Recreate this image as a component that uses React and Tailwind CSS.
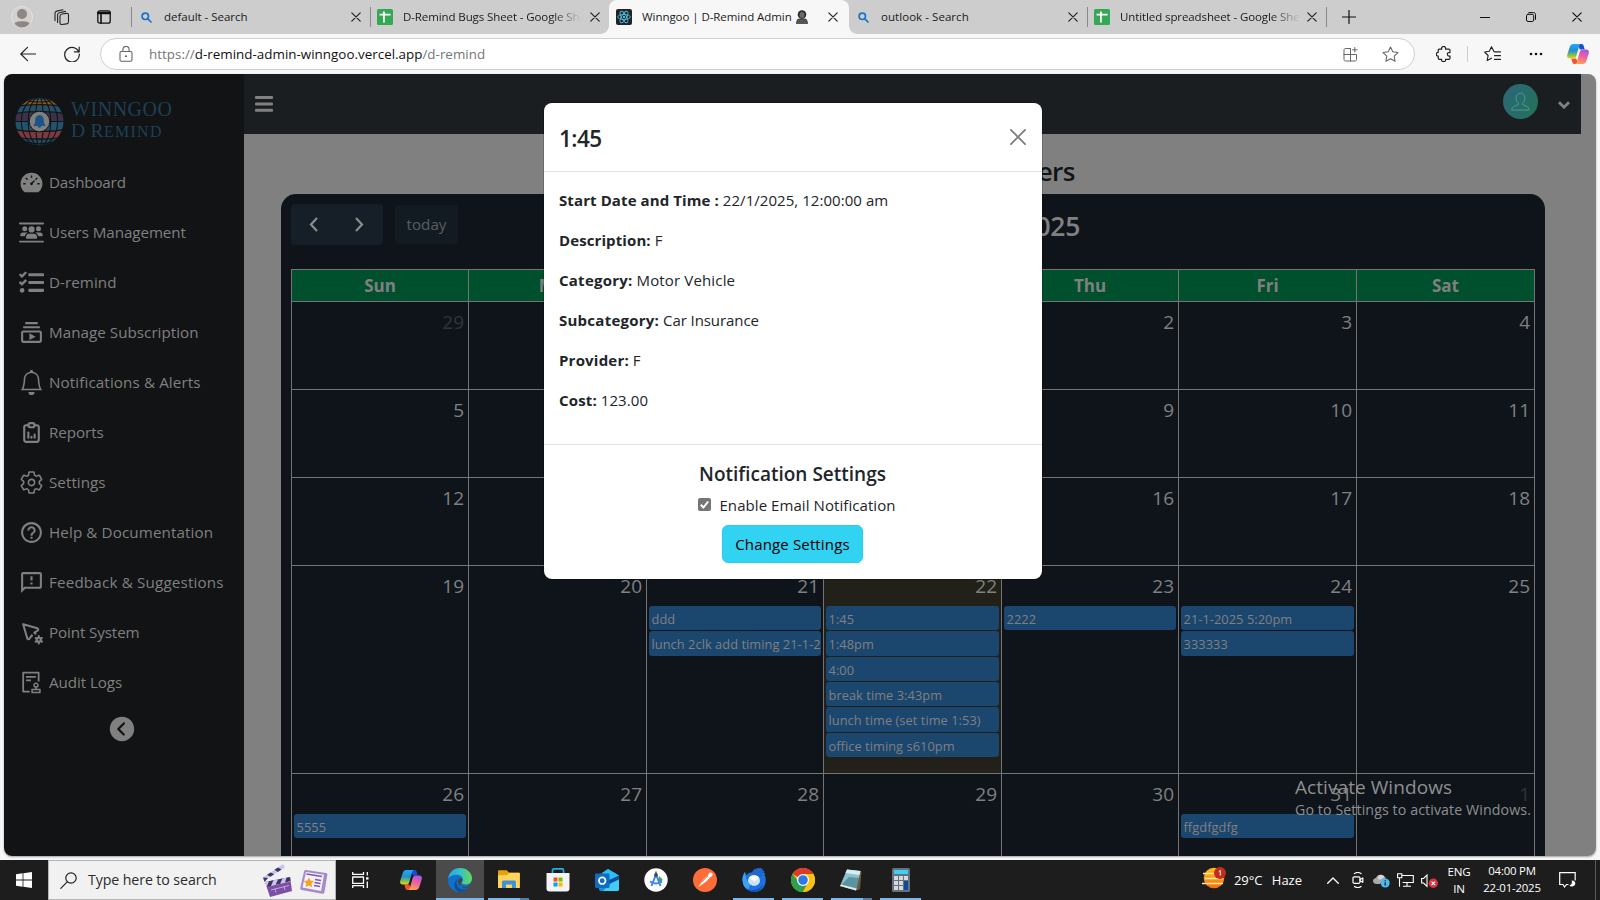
import React from "react";
import { AiFillDashboard, AiOutlineAudit } from "react-icons/ai";
import { FaUsersBetweenLines } from "react-icons/fa6";
import { FaTasks } from "react-icons/fa";
import { MdOutlineSubscriptions, MdHelpOutline, MdOutlineFeedback } from "react-icons/md";
import { BsBell } from "react-icons/bs";
import { TbReportAnalytics, TbPointerCog } from "react-icons/tb";
import { IoSettingsOutline } from "react-icons/io5";
import { IoIosArrowDropleftCircle } from "react-icons/io";

const Svg = ({ children, className = "", vb = "0 0 24 24", ...rest }) => (
  <svg viewBox={vb} fill="none" stroke="currentColor" strokeLinecap="round" strokeLinejoin="round" className={"shrink-0 block " + className} {...rest}>
    {children}
  </svg>
);

/* ---------- browser chrome ---------- */

const CloseX = ({ className = "" }) => (
  <Svg vb="0 0 10 10" className={"w-[10px] h-[10px] text-[#222] " + className} strokeWidth="1.2">
    <path d="M.8.8l8.4 8.4M9.2.8L.8 9.2" />
  </Svg>
);

const SearchFav = () => (
  <Svg vb="0 0 11 11" className="w-[11px] h-[11px] text-[#1a73c8]" strokeWidth="1.7">
    <circle cx="4.3" cy="4.3" r="3.2" />
    <path d="M6.8 6.8l3.2 3.2" />
  </Svg>
);

const SheetFav = () => (
  <svg viewBox="0 0 16 16" className="w-4 h-4 shrink-0 block">
    <rect width="16" height="16" rx="1.5" fill="#34a853" />
    <path d="M2.6 5.6h11M6.9 2.6v11" stroke="#fff" strokeWidth="1.8" />
  </svg>
);

const ReactFav = () => (
  <svg viewBox="0 0 16 16" className="w-4 h-4 shrink-0 block">
    <rect width="16" height="16" rx="2" fill="#20232a" />
    <g fill="none" stroke="#53b9d4" strokeWidth=".9">
      <ellipse cx="8" cy="8" rx="6.4" ry="2.5" />
      <ellipse cx="8" cy="8" rx="6.4" ry="2.5" transform="rotate(60 8 8)" />
      <ellipse cx="8" cy="8" rx="6.4" ry="2.5" transform="rotate(120 8 8)" />
    </g>
    <circle cx="8" cy="8" r="1.2" fill="#53b9d4" />
  </svg>
);

const Divider = () => <div className="w-px h-5 bg-[#8a8a8a] shrink-0" />;

const TabTitle = ({ children, fade, className = "" }) => (
  <span
    className={
      "block overflow-hidden whitespace-nowrap text-[11.5px] leading-[18px] text-[#1b1b1b] " +
      (fade ? "[mask-image:linear-gradient(to_right,#000_calc(100%-28px),transparent)] " : "") +
      className
    }
  >
    {children}
  </span>
);

function TabBar() {
  return (
    <div className="h-[34px] bg-[#cdcdcd] flex items-center shrink-0">
      <svg viewBox="0 0 22 22" className="ml-[11px] w-[22px] h-[22px] shrink-0">
        <circle cx="11" cy="11" r="10.5" fill="#d3d0cd" stroke="#e4e1de" />
        <circle cx="11" cy="8" r="5" fill="#8d8783" />
        <path d="M3.5 17.5c1-3 14-3 15 0-2 2.800-4.500 4-7.500 4s-5.500-1.200-7.500-4z" fill="#8d8783" />
      </svg>
      <Svg vb="0 0 16 16" className="ml-[21px] w-4 h-4 text-[#222]" strokeWidth="1.1">
        <rect x="6" y="4.600" width="8.500" height="10.500" rx="2" transform="skewY(-8) translate(0 1.500)" />
        <path d="M3.600 13.400V6c0-1.200.6-2 1.800-2.300l6-1.300M1 11.600V4.400C1 3.200 1.600 2.400 2.800 2.100L9 .8" />
      </Svg>
      <Svg vb="0 0 14 14" className="ml-[27px] w-[14px] h-[14px] text-[#111]" strokeWidth="1.3">
        <rect x=".8" y=".8" width="12.400" height="12.400" rx="2" />
        <path d="M1 2.500h12M1 3.400h12M4 3.500v9.500" strokeWidth="1.600" />
      </Svg>
      <div className="ml-5 flex items-center">
        <Divider />
        <div className="w-[238px] pl-[9px] flex items-center">
          <SearchFav />
          <TabTitle className="ml-3 w-[176px] tracking-[-0.030px]">default - Search</TabTitle>
          <CloseX className="ml-[11px]" />
        </div>
        <Divider />
        <div className="w-[238px] pl-[6px] flex items-center">
          <SheetFav />
          <TabTitle fade className="ml-[10px] w-[178px] tracking-[-0.1px]">D-Remind Bugs Sheet - Google Sheets</TabTitle>
          <CloseX className="ml-[9px]" />
        </div>
      </div>
      <div className="relative w-[240px] h-[34px] bg-[#f7f7f7] rounded-t-[8px] flex items-center pl-[7px]">
        <div className="absolute -left-2 bottom-0 w-2 h-2 bg-[radial-gradient(circle_at_0_0,transparent_7.500px,#f7f7f7_8px)]" />
        <div className="absolute -right-2 bottom-0 w-2 h-2 bg-[radial-gradient(circle_at_100%_0,transparent_7.500px,#f7f7f7_8px)]" />
        <ReactFav />
        <TabTitle className="ml-[10px] w-[152px] tracking-[-0.060px]">Winngoo | D-Remind Admin</TabTitle>
        <svg viewBox="0 0 12 14" className="ml-[2px] w-3 h-[14px] shrink-0">
          <circle cx="6" cy="4.500" r="4.300" fill="#2b2b2b" />
          <ellipse cx="6" cy="5" rx="2.500" ry="2.900" fill="#6a6a6a" />
          <path d="M1 11c0-1.600 1-2.300 5-2.300s5 .7 5 2.300l.8 2.500H.2z" fill="#555" stroke="#222" strokeWidth=".6" />
        </svg>
        <CloseX className="ml-[20px]" />
      </div>
      <div className="w-[238px] pl-[9px] flex items-center">
        <SearchFav />
        <TabTitle className="ml-3 w-[176px] tracking-[0.050px]">outlook - Search</TabTitle>
        <CloseX className="ml-[11px]" />
      </div>
      <Divider />
      <div className="w-[238px] pl-[6px] flex items-center">
        <SheetFav />
        <TabTitle fade className="ml-[10px] w-[180px] tracking-[-0.1px]">Untitled spreadsheet - Google Sheets</TabTitle>
        <CloseX className="ml-[7px]" />
      </div>
      <Divider />
      <Svg vb="0 0 14 14" className="ml-[15px] w-[14px] h-[14px] text-[#111]" strokeWidth="1.200">
        <path d="M7 .5v13M.5 7h13" />
      </Svg>
      <Svg vb="0 0 10 10" className="ml-auto w-[10px] h-[10px] text-[#111]" strokeWidth="1.100">
        <path d="M.3 5.500h9.400" />
      </Svg>
      <Svg vb="0 0 10 10" className="ml-[36px] w-[10px] h-[10px] text-[#111]" strokeWidth="1">
        <rect x=".5" y="2.300" width="7.200" height="7.200" rx="1.500" />
        <path d="M2.800.6H7.500c1.200 0 2 .8 2 2v4.800" />
      </Svg>
      <CloseX className="ml-[36px] mr-[18px] !text-[#111]" />
    </div>
  );
}

const Copilot = ({ className, id }) => (
  <svg viewBox="0 0 22 20" className={"shrink-0 block " + className}>
    <defs>
      <linearGradient id={id + "a"} x1="0" y1="0" x2="0" y2="1">
        <stop offset="0" stopColor="#23a8f5" />
        <stop offset=".45" stopColor="#1f8fd6" />
        <stop offset=".75" stopColor="#7cc04a" />
        <stop offset="1" stopColor="#f5cf1f" />
      </linearGradient>
      <linearGradient id={id + "b"} x1="0.600" y1="0" x2=".3" y2="1">
        <stop offset="0" stopColor="#a855e8" />
        <stop offset=".45" stopColor="#ee5fa0" />
        <stop offset="1" stopColor="#ffa24d" />
      </linearGradient>
    </defs>
    <path d="M11 0h3.500c1.400 0 1.900.8 2.300 2.200l.9 3.300h-5z" fill="#1a4fd0" />
    <path d="M11 20H7.500c-1.400 0-1.900-.8-2.300-2.200l-.9-3.300h5z" fill="#f0562e" />
    <path d="M6.500 0h7.300c-1 .4-1.400 1.200-1.800 2.500L9.300 12c-.5 1.800-1.400 2.600-3.200 2.600H2.600C.5 14.600-.3 13 .2 11L2.700 3C3.300 1 4.500 0 6.500 0z" fill={"url(#" + id + "a)"} />
    <path d="M15.500 20H8.200c1-.4 1.400-1.200 1.800-2.500L12.700 8c.5-1.800 1.400-2.600 3.200-2.600h3.500c2.100 0 2.900 1.600 2.400 3.600L19.300 17c-.6 2-1.800 3-3.800 3z" fill={"url(#" + id + "b)"} />
  </svg>
);

function AddressBar() {
  return (
    <div className="h-[40px] bg-[#f7f7f7] flex items-center shrink-0 text-[#222]">
      <Svg vb="0 0 16 16" className="ml-[20px] w-4 h-4" strokeWidth="1.200">
        <path d="M15.500 8H.8M7.500 1.300L.8 8l6.700 6.700" />
      </Svg>
      <Svg vb="0 0 16 16" className="ml-[28px] w-4 h-4" strokeWidth="1.200">
        <path d="M14.900 6.200A7.300 7.300 0 1 0 15.300 8M15.200 1v4.800h-4.800" />
      </Svg>
      <div className="ml-[20px] w-[1315px] h-8 rounded-full bg-white border border-[#d0d0d0] flex items-center pl-[18px]">
        <Svg vb="0 0 14 16" className="w-[14px] h-4 text-[#666]" strokeWidth="1.100">
          <rect x="1" y="5.500" width="12" height="9.800" rx="1.500" />
          <path d="M3.900 5.500V3.600a3.100 3.100 0 0 1 6.200 0v1.900" />
          <circle cx="7" cy="10.300" r=".5" fill="currentColor" />
        </Svg>
        <span className="ml-4 text-[13.400px] tracking-[0.010px] leading-5 whitespace-nowrap text-[#767676]">
          https://<span className="text-[#111]">d-remind-admin-winngoo.vercel.app</span>/d-remind
        </span>
        <Svg vb="0 0 15 15" className="ml-auto w-[15px] h-[15px] text-[#666]" strokeWidth="1">
          <path d="M7.500 1.500h-5c-1 0-1.500.5-1.500 1.500v9.500c0 1 .5 1.500 1.500 1.500h9.500c1 0 1.500-.5 1.500-1.500V7.500H1M7.500 1.500V14M11.800 0.500v4.600M9.500 2.800h4.600" />
        </Svg>
        <Svg className="ml-[24px] mr-[15px] w-[17px] h-[17px] text-[#666]" strokeWidth="1.500">
          <path d="M12 1.500l3.200 6.700 7.300 1-5.300 5.100 1.300 7.300L12 18.100l-6.500 3.500 1.300-7.300L1.500 9.200l7.300-1z" />
        </Svg>
      </div>
      <Svg vb="0 0 16 16" className="ml-[21px] w-4 h-4" strokeWidth="1.200">
        <path d="M3 3.200h2.700c-.4-1.700.6-2.700 1.900-2.700s2.300 1 1.900 2.700h3.300c.7 0 1.200.5 1.200 1.200v2.200c-1.700-.4-2.600.500-2.600 1.700s.9 2.100 2.600 1.700v2c0 .8-.5 1.300-1.200 1.300H9.500c.4 1.700-.6 2.400-1.900 2.400s-2.300-.7-1.900-2.400H3.400c-.8 0-1.200-.5-1.200-1.300v-2C.9 10 .4 9.300.4 8.200s.6-1.900 1.800-1.700V4.400c0-.700.3-1.200.8-1.200z" />
      </Svg>
      <div className="ml-[15px] w-px h-4 bg-[#cfcfcf]" />
      <Svg vb="0 0 17 16" className="ml-[16px] w-[17px] h-4" strokeWidth="1.150">
        <path d="M9.800 5.300L7.500.8 5.300 5.300.6 6l3.500 3.500-.9 5 4.300-2.300M10.500 5.800h6M10.500 9.600h6M10.500 13.400h6" />
      </Svg>
      <svg viewBox="0 0 14 4" className="ml-[28px] w-[14px] h-1">
        <circle cx="2" cy="2" r="1.300" fill="#111" />
        <circle cx="7" cy="2" r="1.300" fill="#111" />
        <circle cx="12" cy="2" r="1.300" fill="#111" />
      </svg>
      <Copilot id="tc" className="ml-[24px] w-[22px] h-5" />
    </div>
  );
}

/* ---------- app sidebar ---------- */

const Globe = () => (
  <svg viewBox="0 0 50 50" className="w-[49px] h-[49px] shrink-0">
    <defs>
      <clipPath id="gl">
        <circle cx="25" cy="25" r="24.500" />
      </clipPath>
    </defs>
    <g clipPath="url(#gl)">
      <rect width="50" height="4" fill="#234a5c" />
      <rect y="3" width="50" height="6" fill="#7b5a2a" />
      <rect y="9" width="50" height="7" fill="#24506a" />
      <rect y="16" width="50" height="9" fill="#3b3148" />
      <rect y="25" width="50" height="9" fill="#22536c" />
      <rect y="34" width="50" height="8" fill="#7a3a40" />
      <rect y="42" width="50" height="8" fill="#234a60" />
      <g fill="none" stroke="#111314" strokeWidth="1.100">
        <path d="M0 10c12-3 38-3 50 0M0 17c12-3 38-3 50 0M0 25h50M0 33c12 3 38 3 50 0M0 40c12 4 38 4 50 0M12 3.500c8 2 18 2 26 0M12 46c8 2 18 2 26 0" />
        <ellipse cx="25" cy="25" rx="4" ry="25" />
        <ellipse cx="25" cy="25" rx="11.500" ry="25" />
        <ellipse cx="25" cy="25" rx="18.500" ry="25" />
      </g>
    </g>
    <circle cx="25" cy="25" r="10.500" fill="#808080" stroke="#111314" strokeWidth="1" />
    <path d="M25 18.500c-3.400 0-4.400 2.600-4.400 5.500 0 2.500-.6 3.700-1.600 4.700v1h4.300c.2 1.200.8 1.800 1.700 1.800s1.500-.6 1.700-1.800H31v-1c-1-1-1.600-2.200-1.600-4.700 0-2.900-1-5.500-4.400-5.500z" fill="#1c5585" />
  </svg>
);

const NAV = [
  ["Dashboard", AiFillDashboard, "tracking-[-0.180px]"],
  ["Users Management", FaUsersBetweenLines, "tracking-[-0.080px]"],
  ["D-remind", FaTasks, "tracking-[0.040px]"],
  ["Manage Subscription", MdOutlineSubscriptions, "tracking-[0.030px]"],
  ["Notifications & Alerts", BsBell, "tracking-[0.110px]"],
  ["Reports", TbReportAnalytics, "tracking-[-0.080px]"],
  ["Settings", IoSettingsOutline, "tracking-[0.040px]"],
  ["Help & Documentation", MdHelpOutline, "tracking-[0.110px]"],
  ["Feedback & Suggestions", MdOutlineFeedback, "tracking-[0.170px]"],
  ["Point System", TbPointerCog, "tracking-[-0.120px]"],
  ["Audit Logs", AiOutlineAudit, "tracking-[-0.080px]"],
];

function Sidebar() {
  return (
    <aside className="w-[240px] shrink-0 bg-[#111314] text-[#808080]">
      <div className="h-[83px] pt-[23px] pl-[11px] flex">
        <Globe />
        <div className="ml-[7px] pt-[2px] text-[#1e4056] font-['Liberation_Serif',serif] whitespace-nowrap">
          <div className="text-[20px] leading-[21px] tracking-[0.550px]">WINNGOO</div>
          <div className="text-[19.500px] leading-[21px] tracking-[0.300px]">
            D R<span className="text-[16px] tracking-[1.300px]">EMIND</span>
          </div>
        </div>
      </div>
      <nav>
        {NAV.map(([label, Icon, cls]) => (
          <div key={label} className="h-[50px] pl-[15px] flex items-center">
            <Icon className="w-[25px] h-[25px] shrink-0" />
            <span className={"ml-[5px] text-[15.200px] leading-6 whitespace-nowrap " + cls}>{label}</span>
          </div>
        ))}
      </nav>
      <div className="flex justify-center pr-[5px]">
        <IoIosArrowDropleftCircle className="w-[30px] h-[30px] mt-[7px]" />
      </div>
    </aside>
  );
}

/* ---------- calendar ---------- */

const DAYS = ["Sun", "Mon", "Tue", "Wed", "Thu", "Fri", "Sat"];
const EVENTS = {
  "3-2": ["ddd", "lunch 2clk add timing 21-1-2025"],
  "3-3": ["1:45", "1:48pm", "4:00", "break time 3:43pm", "lunch time (set time 1:53)", "office timing s610pm"],
  "3-4": ["2222"],
  "3-5": ["21-1-2025 5:20pm", "333333"],
  "4-0": ["5555"],
  "4-5": ["ffgdfgdfg"],
};
const WEEKS = [
  [29, 30, 31, 1, 2, 3, 4],
  [5, 6, 7, 8, 9, 10, 11],
  [12, 13, 14, 15, 16, 17, 18],
  [19, 20, 21, 22, 23, 24, 25],
  [26, 27, 28, 29, 30, 31, 1],
];
const COLS = "grid grid-cols-[177px_178px_177px_178px_177px_178px_178px] ";
const isMuted = (w, d) => (w === 0 && d < 3) || (w === 4 && d === 6);

function Calendar() {
  return (
    <section className="ml-[37px] w-[1264px] h-[760px] bg-[#0f141b] rounded-[15px] p-[10px] text-[#808080]">
      <div className="h-[65px] flex items-start">
        <div className="w-[92px] h-[41px] rounded-[4px] bg-[#161e27] flex items-center pl-[18px]">
          <Svg vb="0 0 9 15" className="w-[9px] h-[15px] text-[#8c8c8c]" strokeWidth="2.200" strokeLinecap="butt" strokeLinejoin="miter">
            <path d="M8 1L2 7.500 8 14" />
          </Svg>
          <Svg vb="0 0 9 15" className="ml-[37px] w-[9px] h-[15px] text-[#8c8c8c]" strokeWidth="2.200" strokeLinecap="butt" strokeLinejoin="miter">
            <path d="M1 1l6 6.500L1 14" />
          </Svg>
        </div>
        <div className="ml-3 mt-px w-[63px] h-[39px] rounded-[4px] bg-[#131b22] text-[#5a5d61] text-[15.200px] leading-[38px] text-center">today</div>
        <h2 className="ml-auto mr-[455px] mt-px text-[26.500px] leading-[42px] font-semibold tracking-[-0.300px]">January 2025</h2>
      </div>
      <div className="border-t border-l border-[#747474]">
        <div className={COLS}>
          {DAYS.map((d) => (
            <div key={d} className="h-8 bg-[#004f2d] border-r border-b border-[#747474] text-center font-bold text-[17px] leading-[31px]">
              {d}
            </div>
          ))}
        </div>
        {WEEKS.map((week, w) => (
          <div key={w} className={COLS + (w >= 3 ? "h-[208px]" : "h-[88px]")}>
            {week.map((n, d) => (
              <div key={d} className={"min-w-0 border-r border-b border-[#747474] " + (w === 3 && d === 3 ? "bg-[#21211a]" : "")}>
                <div className={"h-10 pr-1 text-right text-[19px] leading-[40px] " + (isMuted(w, d) ? "text-[#303439]" : "")}>{n}</div>
                {(EVENTS[w + "-" + d] || []).map((e) => (
                  <div key={e} className="mx-[2px] mb-px h-[24.350px] rounded-[3px] bg-[#1b466e] overflow-hidden whitespace-nowrap pl-[2.500px] text-[12.800px] leading-[26px] tracking-[0.060px]">
                    {e}
                  </div>
                ))}
              </div>
            ))}
          </div>
        ))}
      </div>
    </section>
  );
}

function Main() {
  return (
    <main className="flex-1 min-w-0 bg-[#808080]">
      <header className="w-[1337px] h-[60px] bg-[#1a1e21] flex items-center text-[#808080]">
        <svg viewBox="0 0 18 16" className="ml-[11px] w-[18px] h-4" fill="currentColor">
          <rect width="18" height="3" rx="1" />
          <rect y="6.400" width="18" height="3" rx="1" />
          <rect y="12.800" width="18" height="3" rx="1" />
        </svg>
        <svg viewBox="0 0 36 36" className="ml-auto w-[35px] h-[35px] mb-[5px]">
          <defs>
            <linearGradient id="av" x1="0" y1="0.200" x2="1" y2=".8">
              <stop offset="0" stopColor="#296878" />
              <stop offset="1" stopColor="#26705a" />
            </linearGradient>
          </defs>
          <circle cx="18" cy="18" r="18" fill="url(#av)" />
          <path d="M18 9.500c-3 0-4.500 2.200-4.500 5 0 2.300 1 4.300 2.500 5.300v1.400l-4.600 1.800c-1.400.6-2.200 1.800-2.400 3.800h18c-.2-2-1-3.200-2.400-3.800L20 21.200v-1.400c1.500-1 2.500-3 2.500-5.300 0-2.800-1.500-5-4.500-5z" fill="none" stroke="#4e9a96" strokeWidth="1" />
        </svg>
        <Svg vb="0 0 12 8" className="ml-[20px] mr-[11px] mt-[2px] w-3 h-2" strokeWidth="2.800" strokeLinecap="butt" strokeLinejoin="miter">
          <path d="M1 1.200l5 5 5-5" />
        </Svg>
      </header>
      <h1 className="h-[60px] w-[831px] pt-5 text-right text-[26px] leading-[34px] font-semibold tracking-[-0.500px] text-[#111417]">D-Remind Calendar For Users</h1>
      <Calendar />
    </main>
  );
}

/* ---------- modal ---------- */

const FIELDS = [
  ["Start Date and Time :", "22/1/2025, 12:00:00 am", "tracking-[0.100px]", "tracking-[0.050px]"],
  ["Description:", "F", "tracking-[0.100px]", ""],
  ["Category:", "Motor Vehicle", "tracking-[0.250px]", "tracking-[0.150px]"],
  ["Subcategory:", "Car Insurance", "tracking-[0.250px]", "tracking-[-0.080px]"],
  ["Provider:", "F", "tracking-[0.200px]", ""],
  ["Cost:", "123.00", "tracking-[0.150px]", "tracking-[0.100px]"],
];

function Modal() {
  return (
    <div className="absolute left-[540px] top-[29px] w-[498px] h-[476px] rounded-[8px] bg-white text-[#212529] shadow-[0_0_0_1px_rgba(0,0,0,0.175)]">
      <div className="h-[69px] border-b border-[#dee2e6] flex items-center pl-[15px] pr-4">
        <h4 className="mt-[4px] text-[22.500px] font-semibold leading-9 tracking-[-0.550px]">1:45</h4>
        <Svg vb="0 0 16 16" className="ml-auto w-4 h-4 text-[#7d7d7d]" strokeWidth="1.800">
          <path d="M.9.9l14.200 14.200M15.100.9L.9 15.100" />
        </Svg>
      </div>
      <div className="h-[273px] border-b border-[#dee2e6] pt-4 pl-[15px]">
        {FIELDS.map(([k, v, kc, vc]) => (
          <p key={k} className="mb-4 h-6 leading-6 text-[15px] whitespace-nowrap">
            <b className={kc}>{k}</b> <span className={vc}>{v}</span>
          </p>
        ))}
      </div>
      <div className="flex flex-col items-center pt-[17px] pr-px">
        <h5 className="text-[19px] leading-6 font-semibold">Notification Settings</h5>
        <div className="mt-[7px] ml-[9px] h-6 flex items-center">
          <svg viewBox="0 0 13 13" className="w-[13px] h-[13px] mb-px">
            <rect width="13" height="13" rx="2" fill="#767676" />
            <path d="M2.800 6.800l2.600 2.700 4.800-6" fill="none" stroke="#fff" strokeWidth="2" />
          </svg>
          <span className="ml-2 text-[15px] leading-6 tracking-[0.070px] whitespace-nowrap">Enable Email Notification</span>
        </div>
        <div className="mt-[8px] w-[141px] h-[38px] rounded-[6px] bg-[#31d2f2] border border-[#25cff2] text-black text-[15px] leading-[36px] tracking-[0.150px] text-center whitespace-nowrap">
          Change Settings
        </div>
      </div>
    </div>
  );
}

/* ---------- taskbar ---------- */

const App48 = ({ children, line, split, active, className = "" }) => (
  <div className={"relative w-[49px] h-10 shrink-0 flex items-center justify-center " + (active ? "bg-[#4b4b4b] " : "") + className}>
    {children}
    {line && (
      <div className={"absolute bottom-0 h-[2px] flex " + (active ? "inset-x-0" : "left-1 right-1")}>
        <div className="flex-1 bg-[#76b9ed]" />
        {split && <div className="w-[9px] bg-[#517fa5]" />}
      </div>
    )}
  </div>
);

function Taskbar() {
  return (
    <div className="h-10 bg-[#1d1d1d] flex items-center shrink-0 text-white">
      <svg viewBox="0 0 16 16" className="ml-4 w-4 h-4 shrink-0" fill="#fff">
        <path d="M0 2.200L6.600 1.300V7.600H0zM7.400 1.200L16 0V7.600H7.400zM0 8.400H6.600V14.700L0 13.800zM7.400 8.400H16V16L7.400 14.800z" />
      </svg>
      <div className="ml-4 w-[288px] h-10 bg-[#f1f1f1] border border-[#b5b5b5] flex items-center">
        <Svg vb="0 0 17 17" className="ml-[11px] w-[17px] h-[17px] text-[#222]" strokeWidth="1.200">
          <circle cx="11" cy="6" r="5.200" />
          <path d="M7.200 9.800L.8 16.300" />
        </Svg>
        <span className="ml-[11px] w-[174px] text-[14.200px] leading-5 tracking-[-0.100px] text-[#2c2c2c] whitespace-nowrap">Type here to search</span>
        <svg viewBox="0 0 30 34" className="w-[30px] h-[34px] shrink-0">
          <path d="M1 14.500L21 1l2 3.500L3 17z" fill="#c9c2f5" />
          <path d="M5 11.800l3.600-2.400 3.600 1.900-3.800 2.400zM12.500 6.800L16 4.400l3.500 2-3.800 2.500zM1 14.500L2.500 19 6 15z" fill="#41345f" />
          <path d="M3 19l25-5 2 14-22 6z" fill="#7b4fa3" />
          <path d="M3 19l25-5 .7 4.500L4.400 24z" fill="#c9c2f5" />
          <path d="M7 18.200l4.500-.9-2.500 5.600-4.400 1zM16 16.400l4.500-.9-2.300 5.300-4.600 1zM24.500 14.700L28 14l.5 4-5.500 1.500z" fill="#41345f" />
          <path d="M9 27l18-4.500M13 25.500l1 4M22 23l1 4" stroke="#c5a5e0" strokeWidth="1" fill="none" />
        </svg>
        <svg viewBox="0 0 28 26" className="ml-[8px] w-[28px] h-[26px] mt-[3px] shrink-0">
          <path d="M6 1l20 3c1 .2 1.500 1 1.300 2L24.500 23c-.3 1.500-1 2-2.500 1.700L2 21c-1.500-.3-2-1-1.700-2.500L4 2.500C4.300 1.300 5 .8 6 1z" fill="#a58cc8" />
          <path d="M6 3l18 2.800L21 22 2.500 18.600z" fill="#f5f0ff" />
          <path d="M6.500 5l15.500 2.500M15 10.500l6 1M14.500 13.500l6 1M14 16.500l6 1" stroke="#7a5ba8" strokeWidth="1.400" fill="none" />
          <path d="M9 8.500l1.600 3.200 3.400.4-2.500 2.500.6 3.600-3.300-1.600-3.200 1.600.6-3.600-2.400-2.600 3.500-.5z" fill="#f7a41d" />
        </svg>
      </div>
      <div className="w-[51px] shrink-0 flex justify-center pr-[5px]">
        <Svg vb="0 0 17 16" className="w-[17px] h-4 ml-[2px]" strokeWidth="1.300" strokeLinecap="butt">
          <path d="M.7 0v2.400h10.800V0M.7 5h10.800v6.400H.7zM.7 16v-2.400h10.800V16M15.300 0v3.500M15.300 9.500V16" />
          <path d="M14.100 5.200h2.400v2.400h-2.400z" fill="currentColor" stroke="none" />
        </Svg>
      </div>
      <App48>
        <Copilot id="bc" className="w-[22px] h-5 mr-px" />
      </App48>
      <App48 line active className="!w-12">
        <svg viewBox="0 0 24 24" className="w-6 h-6">
          <defs>
            <linearGradient id="e1" x1="0" y1=".4" x2="1" y2=".4">
              <stop offset="0" stopColor="#2aa7e6" />
              <stop offset=".5" stopColor="#35c1c9" />
              <stop offset="1" stopColor="#6ad94f" />
            </linearGradient>
          </defs>
          <circle cx="12" cy="12" r="12" fill="#1170c9" />
          <path d="M24 10.500c0 3.500-2 7-5 7.800-1 .4-4.500.3-5-1.300l.5 3c3 1.200 6.500.5 8.600-1.500l1.500-3z" fill="#4b4b4b" />
          <path d="M.1 11C.8 4.500 5.800 0 12 0c7 0 12 5 12 10.300 0 3.700-2.600 6.200-6 6.200-2.600 0-4.200-1-4.200-2 0-.8 1-1.200 1-3 0-2.500-2.500-4.700-6-4.700C4.500 6.800 1 8.800.1 11z" fill="url(#e1)" />
          <path d="M9 11.500c-1.700 4 1 9.500 6 10 2.500.2 4.800-.7 6.700-2.300-1.700 2.700-5.500 4.800-10.200 4.800C6.500 23 4 15.500 9 11.500z" fill="#0d4f9b" />
          <path d="M10.500 11c-1.500 3-.3 5.800 2.800 7.300-1-1.600-1-3 .2-4.200 1.300-1.200 1.300-2.400.5-3.300-.9-.9-2.500-.9-3.500.2z" fill="#3f4650" />
        </svg>
      </App48>
      <App48 line split>
        <svg viewBox="0 0 22 20" className="w-[22px] h-5">
          <path d="M0 1.500C0 .8.500.3 1.200.3h7.500L11 2.500h9.500c.8 0 1.300.5 1.300 1.200v13.500H0z" fill="#e2a30e" />
          <path d="M0 5.200h9L11 3h10.800v15H0z" fill="#ffd45e" />
          <path d="M4 18v-6c0-1 .6-1.600 1.600-1.600h10.700c1 0 1.600.6 1.600 1.600v6h-4v-3.500H8V18z" fill="#3c92d8" />
        </svg>
      </App48>
      <App48>
        <svg viewBox="0 0 24 24" className="w-6 h-6">
          <path d="M6.500 6V2.200c0-.8.5-1.300 1.300-1.300h8.400c.8 0 1.300.5 1.300 1.300V6" fill="none" stroke="#18b5e8" strokeWidth="1.700" />
          <path d="M.5 5h23v15.500c0 2-1 3-3 3h-17c-2 0-3-1-3-3z" fill="#f4f4f4" />
          <path d="M7.500 9.500h4v4h-4z" fill="#f25022" />
          <path d="M12.500 9.500h4v4h-4z" fill="#7fba00" />
          <path d="M7.500 14.500h4v4h-4z" fill="#00a4ef" />
          <path d="M12.500 14.500h4v4h-4z" fill="#ffb900" />
        </svg>
      </App48>
      <App48>
        <svg viewBox="0 0 24 22" className="w-6 h-[22px]">
          <path d="M4 6L13 0l11 6.500V20c0 1.200-.8 2-2 2H6c-1.200 0-2-.8-2-2z" fill="#1490df" />
          <path d="M13 0l11 6.500-8 5L7 4z" fill="#32bdf2" />
          <path d="M24 7v13c0 1.200-.8 2-2 2H8z" fill="#3fd0f7" />
          <path d="M24 6.500v4L14 15l-2-3z" fill="#0b4f9e" />
          <rect y="4.500" width="14.500" height="14.500" rx="1.200" fill="#0f6cc4" />
          <circle cx="7.200" cy="11.700" r="3.300" fill="none" stroke="#fff" strokeWidth="1.700" />
        </svg>
      </App48>
      <App48>
        <svg viewBox="0 0 24 24" className="w-6 h-6">
          <circle cx="12" cy="12" r="11.700" fill="#fff" />
          <path d="M15 8l3.500 3.500L17 15l-3-2z" fill="#34a853" />
          <path d="M12 6.500L7.500 18M12 6.500L16.500 18M6 13.500c3 2.500 9 2.500 12 0" fill="none" stroke="#4285f4" strokeWidth="2" />
          <circle cx="12" cy="7" r="1.900" fill="#3c4a5a" />
          <path d="M11.300 3.500h1.400V6h-1.400z" fill="#3c4a5a" />
        </svg>
      </App48>
      <App48>
        <svg viewBox="0 0 24 24" className="w-6 h-6">
          <circle cx="12" cy="12" r="12" fill="#ff6c37" />
          <path d="M5 19.200l5.500-7.700L16 6.500l2 2-5 5.300z" fill="#fff" />
          <circle cx="17.600" cy="6.600" r="2.100" fill="#fff" />
          <path d="M9 14l6-6" stroke="#ff6c37" strokeWidth=".7" />
        </svg>
      </App48>
      <App48 line>
        <svg viewBox="0 0 24 24" className="w-6 h-6">
          <path d="M.5 11c0-3 1.500-5.500 2.500-7 .3 1.500.8 2.500 1.500 3.200C6 5 8.500 4.500 10 4.500c1-2.800 4-4.300 7.500-4.300 1.500 0 2.500.6 3.500 1l-1 1.400 2.500.4-1 1.500 1.700 1-.7 1.500.8 1.500C25 15 22 23.500 12.500 24 5 24 .3 18 .5 11z" fill="#1a73e0" />
          <path d="M.5 11c0-3 1.500-5.500 2.500-7C3.500 8 4 12 8 17l-1.500 5C2.500 20 .3 16 .5 11z" fill="#3ea0f2" />
          <path d="M10 4.500c1-2.800 4-4.300 7.500-4.300C21 .5 22 5 20 8.500L12 8z" fill="#1f66cf" />
          <path d="M4 20c4 3 13 3.500 17-4-1 5-4.500 8-9 8-3.500 0-6.500-1.800-8-4z" fill="#1550ae" />
          <path d="M6 12c.5-3 3-4.800 6-4.800s5.800 2 6 5.300c0 3.200-2.700 5.300-6 5.300S5.600 15 6 12z" fill="#cfe3fa" />
          <path d="M7 9.800C8 8 10 7.200 12 7.200s4 .8 5.200 2.600L12.500 13.500z" fill="#fff" />
        </svg>
      </App48>
      <App48 line>
        <svg viewBox="0 0 24 24" className="w-6 h-6">
          <circle cx="12" cy="12" r="12" fill="#fbc116" />
          <path d="M12 12L1.600 6A12 12 0 0 1 22.400 6z" fill="#de3a2b" />
          <path d="M1.600 6A12 12 0 0 0 12 24l5-9.500-8 1z" fill="#2da04c" />
          <path d="M12 6h10.400A12 12 0 0 1 12 24l5-9z" fill="#fbc116" />
          <circle cx="12" cy="12" r="6" fill="#fff" />
          <circle cx="12" cy="12" r="4.800" fill="#2f78e8" />
        </svg>
      </App48>
      <App48 line split>
        <svg viewBox="0 0 24 22" className="w-6 h-[22px] mr-[2px]">
          <path d="M8 1l14.500 1.500L21 20l-3 1.500z" fill="#6b5a3c" />
          <path d="M8 0.500L21.500 2 17 21.500 1 17z" fill="#8fc1cc" />
          <path d="M8 0.500L21.500 2l-1 4L6.500 4z" fill="#d7ecef" />
          <path d="M10 8l10 1-3 12.500L1 17z" fill="#2f6f7e" opacity=".55" />
          <path d="M1 17l16 4.500.7-2L2 15.500z" fill="#e2e6e6" />
        </svg>
      </App48>
      <App48 line>
        <svg viewBox="0 0 18 24" className="w-[18px] h-6">
          <rect width="18" height="24" rx="1.500" fill="#65717e" />
          <rect x="2" y="2" width="14" height="4" fill="#3fd0f2" />
          <g fill="#d4d9de">
            <path d="M2 8h4v4H2zM7 8h4v4H7zM12 8h4v4h-4zM2 13h4v4H2zM7 13h4v4H7zM2 18h4v4H2zM7 18h4v4H7z" />
          </g>
          <rect x="12" y="13" width="4" height="9" fill="#0f4a94" />
        </svg>
      </App48>

      <svg viewBox="0 0 24 22" className="ml-auto w-6 h-[22px] mb-[4px] shrink-0">
        <defs>
          <linearGradient id="sun" x1="0" y1="0" x2="0" y2="1">
            <stop offset="0" stopColor="#ffc21a" />
            <stop offset="1" stopColor="#f2700f" />
          </linearGradient>
        </defs>
        <circle cx="12" cy="11" r="10.300" fill="url(#sun)" />
        <path d="M1 6.500h14M3 11.500h18M0 16.500h21" stroke="#ffe6a8" strokeWidth="1.500" />
        <circle cx="18" cy="6" r="6" fill="#c42b1c" />
        <path d="M16.800 4.600l1.500-1.100v5" fill="none" stroke="#fff" strokeWidth="1" />
      </svg>
      <div className="ml-2 w-[68px] flex justify-between text-[13px] leading-5 whitespace-nowrap">
        <span className="tracking-[-0.100px]">29°C</span>
        <span>Haze</span>
      </div>
      <Svg vb="0 0 12 7" className="ml-[25px] w-3 h-[7px]" strokeWidth="1.300">
        <path d="M.7 6.300L6 1l5.300 5.300" />
      </Svg>
      <Svg vb="0 0 12 16" className="ml-[13px] w-3 h-4" strokeWidth="1.200">
        <rect x="1" y="4.800" width="7" height="6.500" rx="1.200" />
        <path d="M8 7.500l2.800-1.600v4.400L8 8.700M2.500 1.600C4.500.2 7 .2 9 1.600M2.500 14.400c2 1.400 4.500 1.400 6.500 0" />
      </Svg>
      <svg viewBox="0 0 17 14" className="ml-[9px] w-[17px] h-[14px] mt-[2px] shrink-0">
        <path d="M4 10C1.500 10 0 8.800 0 7s1.300-2.800 3-3C4 1.500 6 .5 8 .8c2 .2 3 1.200 3.500 2.200l1.500.5-6 6.500z" fill="#a9a9a9" />
        <path d="M4.500 3.500C5.500 1.500 7 .6 8.500.9c1.800.2 2.600 1 3 2.100l-5 3z" fill="#d8d8d8" />
        <circle cx="12.200" cy="9" r="4.500" fill="#4fb8ee" />
        <path d="M12.200 8.300v3.200M12.200 6.200v1" stroke="#123" strokeWidth="1.300" />
      </svg>
      <Svg vb="0 0 17 14" className="ml-[7px] w-[17px] h-[14px]" strokeWidth="1.100" strokeLinejoin="miter">
        <path d="M5.500 2.500h10.800v7H6M2.500 5v8.200M.6.700h4.200v4H.6zM10 9.500v3.500M6.500 13.300h7" />
      </Svg>
      <svg viewBox="0 0 17 14" className="ml-[7px] w-[17px] h-[14px] mt-px shrink-0">
        <path d="M.6 4.500h2L6 1v11.500L2.600 9h-2z" fill="none" stroke="#fff" strokeWidth="1.100" />
        <circle cx="12.300" cy="9.300" r="4.700" fill="#e0303c" />
        <path d="M10.600 7.600l3.400 3.400M14 7.600L10.600 11" stroke="#fff" strokeWidth="1.100" />
      </svg>
      <div className="ml-[9px] w-[24px] text-center text-[11.600px] leading-[17px] tracking-[-0.200px] flex flex-col items-center pb-px">
        <span>ENG</span>
        <span>IN</span>
      </div>
      <div className="ml-[10px] w-[62px] text-center text-[11.400px] leading-[17px] tracking-[-0.200px] whitespace-nowrap flex flex-col items-center pb-[2px]">
        <span>04:00 PM</span>
        <span>22-01-2025</span>
      </div>
      <Svg vb="0 0 17 16" className="ml-[16px] w-[17px] h-4" strokeWidth="1.200" strokeLinejoin="miter">
        <path d="M9 12.500H7.500L5.500 15l-1.500-2.500H.7V.7h15.500V8" />
        <path d="M12.600 8.500c.8 2 .2 4-2.300 5.200 2.500 1.500 5.500.5 6-2 .2-2-1.300-3.400-3.700-3.200z" fill="currentColor" stroke="none" />
      </Svg>
      <div className="ml-[19px] mr-1 w-px h-10 bg-[#5a5a5a]" />
    </div>
  );
}

export default function App() {
  return (
    <div className="w-[1600px] h-[900px] overflow-hidden flex flex-col bg-[#f7f7f7] font-['Open_Sans','Noto_Sans',sans-serif]">
      <TabBar />
      <AddressBar />
      <div className="relative mx-1 h-[782px] rounded-[8px] overflow-hidden flex shrink-0 shadow-[0_1px_2px_rgba(0,0,0,0.35)]">
        <Sidebar />
        <Main />
        <Modal />
        <div className="absolute left-[1291px] top-[700px] text-[#8e8f90] whitespace-nowrap">
          <div className="text-[19px] leading-[26px] tracking-[0.070px]">Activate Windows</div>
          <div className="text-[14.200px] leading-[20px] tracking-[0.100px]">Go to Settings to activate Windows.</div>
        </div>
      </div>
      <div className="h-1 shrink-0" />
      <Taskbar />
    </div>
  );
}
